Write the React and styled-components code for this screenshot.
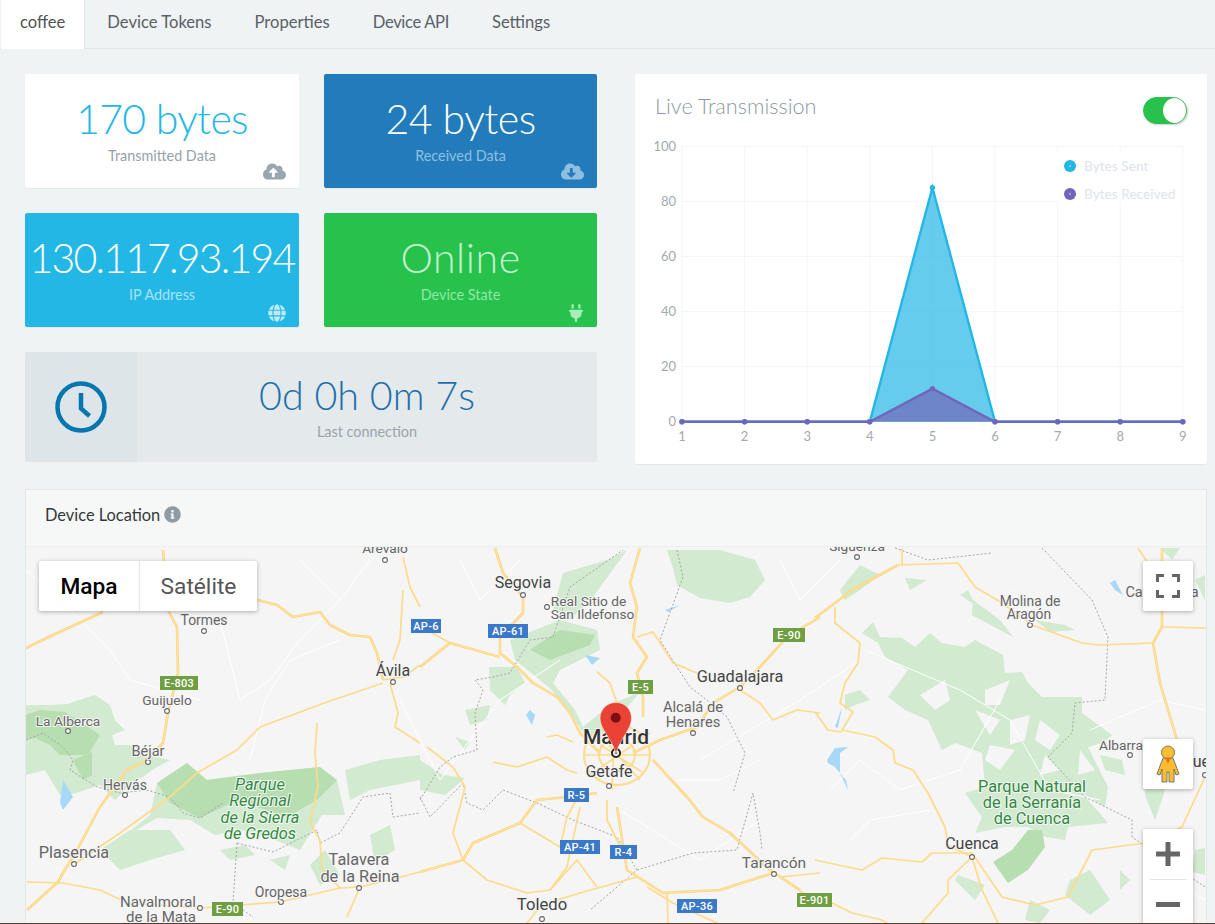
import React from 'react';
import styled, { createGlobalStyle } from 'styled-components';
import { FaCloudUploadAlt, FaCloudDownloadAlt, FaGlobe, FaPlug, FaInfoCircle } from 'react-icons/fa';

const GlobalStyle = createGlobalStyle`
    html, body {
        margin: 0;
        padding: 0;
        height: 924px;
        overflow: hidden;
        background: #eff3f4;
        font-family: 'Lato', 'Open Sans', sans-serif;
    }
`;

const Page = styled.div`
    width: 1215px;
    height: 924px;
    overflow: hidden;
    position: relative;
`;

const Tabs = styled.nav`
    display: flex;
    height: 48px;
    padding-left: 1px;
    border-bottom: 1px solid #dde6e9;
`;

const Tab = styled.a`
    padding: ${p => (p.$active ? '0 19px' : '0 21px')};
    margin-right: ${p => (p.$active ? '1px' : '0')};
    line-height: 44px;
    height: 49px;
    box-sizing: border-box;
    font-size: 16.6px;
    letter-spacing: ${p => p.$spacing || 0}px;
    color: ${p => (p.$active ? '#4f5256' : '#5a6066')};
    background: ${p => (p.$active ? '#fff' : 'transparent')};
    border-right: 1px solid ${p => (p.$active ? '#dde6e9' : 'transparent')};
`;

const Content = styled.div`
    padding: 25px 8px 0 25px;
    display: flex;
    flex-direction: column;
    gap: 25px;
`;

const TopRow = styled.div`
    display: flex;
    justify-content: space-between;
`;

const LeftColumn = styled.div`
    width: 572px;
    display: grid;
    grid-template-columns: 274px 273px;
    grid-template-rows: 114px 114px 110px;
    gap: 25px;
`;

const StatCard = styled.div`
    position: relative;
    border-radius: 2px;
    background: ${p => p.$bg};
    box-shadow: 0 1px 1px rgba(0, 0, 0, 0.05);
    text-align: center;
    padding-top: 20px;
    box-sizing: border-box;
`;

const StatValue = styled.div`
    font-size: 41px;
    font-weight: 300;
    line-height: 50px;
    white-space: nowrap;
    letter-spacing: ${p => p.$spacing || 0}px;
    color: ${p => p.$color};
`;

const StatLabel = styled.div`
    font-size: 14.4px;
    line-height: 18px;
    margin-top: 3px;
    color: ${p => p.$color};
`;

const CornerIcon = styled.span`
    position: absolute;
    right: ${p => p.$right || 13}px;
    bottom: 5px;
    font-size: ${p => p.$size || 23}px;
    line-height: 0;
    color: ${p => p.$color};
`;

const ClockCard = styled.div`
    grid-column: 1 / span 2;
    display: flex;
    background: #e4e9ec;
    border-radius: 2px;
`;

const ClockIconBox = styled.div`
    width: 112px;
    display: flex;
    align-items: center;
    justify-content: center;
    background: #dde5e8;
    border-radius: 2px 0 0 2px;
`;

const ClockText = styled.div`
    flex: 1;
    text-align: center;
    padding-top: 18px;
`;

const ClockValue = styled.div`
    font-size: 39.5px;
    font-weight: 300;
    line-height: 50px;
    color: #1f6fab;
`;

const ClockLabel = styled.div`
    font-size: 14.4px;
    line-height: 18px;
    margin-top: 3px;
    color: #9aa4ab;
`;

const ChartCard = styled.section`
    width: 572px;
    height: 390px;
    background: #fff;
    border-radius: 2px;
    box-shadow: 0 1px 1px rgba(0, 0, 0, 0.05);
    box-sizing: border-box;
    padding: 23px 20px 0 20px;
`;

const ChartHeader = styled.div`
    display: flex;
    justify-content: space-between;
    align-items: flex-start;
    height: 27px;
`;

const ChartTitle = styled.h3`
    margin: 0;
    font-size: 21.7px;
    font-weight: 300;
    line-height: 18px;
    color: #8d99a3;
`;

const Toggle = styled.div`
    width: 44px;
    height: 27px;
    border-radius: 14px;
    background: #27c24c;
    display: flex;
    justify-content: flex-end;
    box-sizing: border-box;
    border: 1px solid #27c24c;
    box-shadow: 1px 1px 2px rgba(0, 0, 0, 0.2);
`;

const Knob = styled.span`
    width: 23px;
    height: 25px;
    border-radius: 50%;
    background: #fff;
`;

const ChartSvg = styled.svg`
    display: block;
    width: 572px;
    height: 340px;
    margin-left: -20px;
    text {
        font-family: 'Lato', sans-serif;
    }
`;

const Panel = styled.section`
    width: 1182px;
    height: 440px;
    box-sizing: border-box;
    border: 1px solid #e3e8ea;
    border-bottom: none;
    background: #f6f8f8;
`;

const PanelHeader = styled.header`
    height: 57px;
    padding: 0 0 7px 19px;
    display: flex;
    align-items: center;
    gap: 4px;
    font-size: 16.4px;
    color: #33383c;
    border-bottom: 1px solid #eceff0;
    box-sizing: border-box;
`;

const InfoIcon = styled.span`
    display: flex;
    font-size: 17px;
    color: #8f9ba3;
`;

const MapArea = styled.div`
    position: relative;
    height: 377px;
    overflow: hidden;
    background: #f5f5f5;
`;

const MapSvg = styled.svg`
    display: block;
    width: 1180px;
    height: 377px;
    text {
        font-family: 'Roboto', sans-serif;
        text-anchor: middle;
        paint-order: stroke;
        stroke: #f5f5f5;
        stroke-width: 2px;
    }
    text.shield {
        stroke: none;
        font-weight: 500;
        letter-spacing: 0.3px;
    }
`;

const MapTypes = styled.div`
    position: absolute;
    left: 13px;
    top: 14px;
    display: flex;
    height: 50px;
    background: #fff;
    border-radius: 2px;
    box-shadow: 0 1px 4px rgba(0, 0, 0, 0.3);
`;

const MapType = styled.div`
    display: flex;
    align-items: center;
    justify-content: center;
    width: ${p => p.$w}px;
    font-family: 'Roboto', sans-serif;
    font-size: 22.7px;
    font-weight: ${p => (p.$active ? 500 : 400)};
    color: ${p => (p.$active ? '#000' : '#565656')};
    border-right: ${p => (p.$active ? '1px solid #e6e6e6' : 'none')};
`;

const MapButton = styled.div`
    position: absolute;
    right: 13px;
    top: ${p => p.$top}px;
    width: 50px;
    height: ${p => p.$h || 50}px;
    background: #fff;
    border-radius: 2px;
    box-shadow: 0 1px 4px rgba(0, 0, 0, 0.3);
    display: flex;
    flex-direction: ${p => (p.$column ? 'column' : 'row')};
    align-items: center;
    justify-content: center;
`;

const ZoomPart = styled.div`
    height: 50px;
    width: 50px;
    flex: none;
    display: flex;
    align-items: center;
    justify-content: center;
`;

const ZoomDivider = styled.div`
    width: 37px;
    height: 1px;
    flex: none;
    background: #e6e6e6;
`;

const BottomLine = styled.div`
    position: absolute;
    left: 0;
    right: 0;
    bottom: 0;
    height: 1px;
    background: #5a3a30;
`;

const yTicks = [100, 80, 60, 40, 20, 0];
const xTicks = [1, 2, 3, 4, 5, 6, 7, 8, 9];
const sent = [0, 0, 0, 0, 85, 0, 0, 0, 0];
const received = [0, 0, 0, 0, 12, 0, 0, 0, 0];
const CHART_TOP = 50;
const px = n => 47 + (n - 1) * 62.6;
const py = v => 347.7 - v * 2.754;

const Series = ({ data, color, fill }) => {
    const pts = data.map((v, i) => `${px(i + 1)},${py(v)}`).join(' ');
    return (
        <g>
            <polygon points={`${px(1)},${py(0)} ${pts} ${px(9)},${py(0)}`} fill={fill} />
            <polyline points={pts} fill="none" stroke={color} strokeWidth="2.4" />
            {data.map((v, i) => (
                <circle key={i} cx={px(i + 1)} cy={py(v)} r="2.7" fill={color} />
            ))}
        </g>
    );
};

const LiveChart = () => (
    <ChartSvg viewBox={`0 ${CHART_TOP} 572 340`}>
        {yTicks.map(t => (
            <g key={t}>
                <line x1={px(1)} x2={px(9)} y1={py(t)} y2={py(t)} stroke="#f3f6f7" />
                <text x="41" y={py(t) + 4.5} textAnchor="end" fontSize="13" fill="#a3a9ae">{t}</text>
            </g>
        ))}
        {xTicks.map(t => (
            <g key={t}>
                <line x1={px(t)} x2={px(t)} y1={py(100)} y2={py(0)} stroke="#f3f6f7" />
                <text x={px(t)} y={py(0) + 19} textAnchor="middle" fontSize="13" fill="#a3a9ae">{t}</text>
            </g>
        ))}
        <Series data={sent} color="#23b7e5" fill="rgba(35,183,229,0.7)" />
        <Series data={received} color="#7266ba" fill="rgba(114,102,186,0.7)" />
        <rect x="422" y="79" width="126" height="49" fill="#fff" opacity="0.85" />
        <circle cx="435" cy="92" r="6" fill="#23b7e5" />
        <circle cx="435" cy="92" r="0.7" fill="#fff" />
        <text x="449" y="97" fontSize="13.7" fill="#dde4ea">Bytes Sent</text>
        <circle cx="435" cy="120" r="6" fill="#7266ba" />
        <circle cx="435" cy="120" r="0.7" fill="#fff" />
        <text x="449" y="125" fontSize="13.7" fill="#dde4ea">Bytes Received</text>
    </ChartSvg>
);

// map shapes in page coordinates, the viewBox starts at the map's corner
const lightGreen = [
    '26,705 50,705 67,704 95,695 110,705 115,720 125,730 112,735 115,745 130,745 145,755 170,760 152,770 125,790 115,800 100,785 70,795 60,795 45,770 26,775',
    '157,783 187,763 207,780 260,773 320,767 337,780 345,815 322,815 300,850 270,838 240,830 215,835 190,820 157,818 122,838 150,815',
    '100,850 130,830 170,830 185,850 150,860 120,870',
    '220,850 245,845 255,855 230,860',
    '270,860 290,855 285,870',
    '310,865 325,850 340,875 320,885',
    '370,835 390,825 395,850 375,862',
    '345,770 380,760 420,755 420,780 370,790 350,800',
    '510,640 560,620 597,630 600,650 560,670 553,683 575,710 583,727 610,705 640,692 625,710 605,730 600,745 585,735 570,713 552,690 530,672 515,660',
    '489,667 517,667 525,683 510,695 505,705 490,690',
    '563,573 607,560 627,550 593,597 570,620 553,610',
    '667,550 720,550 755,560 765,580 750,597 730,603 700,598 677,585 672,565',
    '465,710 490,705 487,720 470,725',
    '420,760 443,775 465,778 445,795 420,790',
    '455,737 470,742 465,750',
    '862,633 873,622 880,637 902,638 915,647 930,633 942,643 965,647 975,640 1003,655 1005,673 1022,672 1028,683 1042,697 1082,697 1082,713 1112,735 1102,743 1088,747 1108,787 1105,807 1082,793 1108,823 1068,827 1065,840 1045,837 1028,827 1005,827 975,833 982,817 965,793 985,787 982,753 955,743 942,750 928,720 905,710 888,697 908,670 885,657 878,643',
    '973,600 1000,620 1013,637 985,622 972,615',
    '905,578 927,580 910,590',
    '960,595 968,590 975,605',
    '1035,620 1065,625 1075,630 1050,632',
    '840,590 860,565 880,575 860,590 845,600',
    '1070,880 1090,870 1110,900 1090,915 1065,895',
    '1030,900 1050,910 1040,923 1025,920',
    '955,880 958,875 985,885 975,900 970,895',
    '1143,770 1160,760 1165,790 1155,820 1145,795',
    '1120,870 1130,880 1120,890',
    '1195,850 1205,848 1205,875 1192,872',
    '845,695 860,690 870,700 855,705 845,710',
    '1100,755 1122,760 1125,775 1105,770',
    '1160,548 1180,548 1172,560',
    '1195,580 1205,575 1205,600',
];
const darkGreen = [
    '157,783 187,763 207,780 260,773 320,767 337,780 317,800 287,817 237,800 200,818 170,803',
    '26,715 40,710 65,712 85,725 100,735 88,755 60,755 50,745 35,738 26,740',
    '73,760 92,752 92,775 83,780',
    '530,650 560,630 595,635 590,645 550,660',
    '1028,830 1042,830 1045,847 1028,870 1008,883 993,862 1012,850',
];
// cut outs showing the land colour through the forest
const gaps = [
    '985,690 1010,680 1000,705 985,705',
    '975,710 1000,720 990,735',
    '1010,720 1030,715 1025,740 1010,745',
    '990,745 1015,750 1000,770 985,760',
    '1040,720 1060,735 1050,750 1035,740',
    '920,695 945,680 950,700 935,710',
    '1045,755 1060,770 1040,775',
    '1080,750 1095,770 1078,775',
];
const water = [
    '63,780 73,797 63,810 60,803',
    '1110,583 1115,580 1123,595 1115,590',
    '827,760 835,748 848,747 840,753 840,773 848,790 846,780 835,767 828,763',
    '835,727 842,707 838,728',
    '585,655 600,658 592,665',
    '530,710 535,715 532,725 526,715',
    '665,610 680,605 668,612',
];
const highways = [
    '163,550 168,610 177,627 178,673 168,713 163,743 147,760 127,770 100,807 77,850 63,873 58,882 27,910',
    '26,648 53,635 103,612',
    '257,600 277,605 293,617 320,612 330,625 350,635 370,637 377,653 383,680',
    '495,548 503,573 523,597 523,613 500,637 500,653 517,667 533,683 557,697 570,713 580,733 600,753',
    '420,667 450,643 500,657',
    '640,548 630,583 637,607 633,637 647,657 637,673 643,697 643,717',
    '820,617 787,637 760,667 740,687 713,703 697,727 660,740 633,753',
    '653,760 687,797 703,817 730,833 770,870 800,890',
    '773,873 720,890 663,893 627,870 617,807',
    '815,618 835,603 852,590 898,565',
    '1153,643 1160,683 1177,740',
    '1162,627 1162,548',
    '1153,643 1162,627',
    '420,872 463,860 473,843 520,823 537,800 567,797 597,793',
];
const roads = [
    '383,683 327,702 260,727 237,750 197,773 170,797 120,833 73,865',
    '390,683 398,713 395,727 420,743',
    '383,680 403,677 420,665',
    '403,557 410,587 420,607',
    '403,590 400,640 393,660',
    '27,882 63,883 100,890 127,903 200,908 280,902 340,888 360,887 397,878 420,872',
    '317,723 315,753 318,787 310,823 320,840 322,870 340,888',
    '360,887 347,917',
    '450,643 427,630',
    '597,672 610,683 617,703',
    '740,690 760,703 773,720 797,710 820,713',
    '637,637 653,632 673,663 697,673',
    '607,800 607,820 627,860',
    '667,893 668,923',
    '647,887 673,903 717,923',
    '820,873 780,877',
    '780,877 803,893 820,900',
    '520,823 560,847 567,817 580,793',
    '463,860 453,833 465,787 453,767 427,747',
    '463,860 487,880 527,893 550,890 577,860 597,887',
    '550,890 567,867 580,807',
    '493,762 517,767 547,757 567,770 577,773',
    '547,737 557,735 573,742',
    '527,923 543,903',
    '547,903 580,893 637,877',
    '898,565 958,563 975,587 1002,603 1032,625 1082,643 1098,645 1153,643',
    '902,548 902,565',
    '1162,627 1207,628',
    '1138,548 1148,563',
    '835,607 835,623 860,643 858,663 845,683 840,703 853,712 842,730 875,737 893,750 895,763 913,770 928,793 945,827 948,845 972,857',
    '815,712 828,730 842,732',
    '815,860 862,870 882,858 922,862 932,853 972,853 1002,897 1035,905 1068,897 1092,850 1145,843 1182,827 1205,777',
    '972,857 948,880 948,893 922,923',
    '972,857 982,890 998,923',
    '832,903 852,913 882,920 887,923',
    '600,735 640,780',
    '590,775 650,733',
    '615,725 612,790',
    '584,755 650,755',
    '590,738 642,772',
];
const whiteRoads = [
    '26,570 60,600 110,650 130,680 200,700',
    '220,620 240,700 270,680 300,640 340,600',
    '250,760 265,700 290,660 340,640',
    '400,700 440,780 500,700 560,660',
    '700,760 800,700 860,660',
    '865,650 960,690 1010,720 1050,790 1100,800',
    '830,790 860,760 900,790 960,770 1000,700',
    '1090,730 1160,700 1205,710',
    '850,840 870,820 930,810',
    '460,560 480,600 520,560',
    '620,810 700,860 760,820',
    '1010,590 1040,620',
    '300,560 340,600 370,560',
    '670,780 720,780 760,760',
    '780,560 800,600 840,560',
    '1170,880 1205,900',
];
const borders = [
    '26,740 43,733 63,747 73,760 70,770 97,787 120,793 147,790 170,797 183,813 200,818 223,803',
    '237,843 233,903 253,917',
    '237,843 273,852 317,830 320,843 340,833 363,797 390,793 393,817 420,813',
    '420,800 440,767 453,757 477,750 475,713 483,690 475,680 493,677 510,673 530,640 553,637 570,587 623,550',
    '420,797 430,817 463,783 467,803 483,810 503,790 537,803 573,820 617,837 637,870 590,910',
    '637,870 693,853 737,850 753,793 760,833 762,850',
    '677,550 683,577 660,640 677,667 690,687 703,697 727,717 745,753 733,793',
    '895,548 928,560 992,553',
    '1042,548 1092,600 1108,637 1105,700 1075,703 1072,733 1048,757 1085,797 1132,820 1132,837 1205,887',
];
const shields = [
    { x: 160, y: 676, w: 38, t: 'E-803', c: '#6e9f43' },
    { x: 212, y: 902, w: 31, t: 'E-90', c: '#6e9f43' },
    { x: 411, y: 619, w: 30, t: 'AP-6', c: '#3a78c8' },
    { x: 488, y: 624, w: 40, t: 'AP-61', c: '#3a78c8' },
    { x: 773, y: 628, w: 32, t: 'E-90', c: '#6e9f43' },
    { x: 628, y: 680, w: 25, t: 'E-5', c: '#6e9f43' },
    { x: 564, y: 788, w: 25, t: 'R-5', c: '#3a78c8' },
    { x: 560, y: 840, w: 40, t: 'AP-41', c: '#3a78c8' },
    { x: 610, y: 845, w: 27, t: 'R-4', c: '#3a78c8' },
    { x: 677, y: 899, w: 40, t: 'AP-36', c: '#3a78c8' },
    { x: 797, y: 893, w: 35, t: 'E-901', c: '#6e9f43' },
];
const dots = [
    [385, 560], [204, 631], [393, 682], [167, 711], [68, 731], [148, 762], [125, 795], [74, 864], [359, 888],
    [281, 902], [200, 908], [523, 595], [547, 607], [740, 688], [693, 733], [609, 786], [542, 919], [774, 874],
    [857, 557], [1030, 625], [1130, 755], [1205, 775], [972, 857],
];
const labels = [
    { x: 385, y: 553, s: 13.7, t: 'Arévalo' },
    { x: 204, y: 625, s: 13.9, t: 'Tormes' },
    { x: 393, y: 676, s: 16, t: 'Ávila', c: '#444' },
    { x: 167, y: 705, s: 13.7, t: 'Guijuelo' },
    { x: 68, y: 726, s: 13.7, t: 'La Alberca' },
    { x: 148, y: 756, s: 14.5, t: 'Béjar' },
    { x: 125, y: 790, s: 14, t: 'Hervás' },
    { x: 74, y: 858, s: 16.3, t: 'Plasencia' },
    { x: 359, y: 865, s: 16.3, t: 'Talavera' },
    { x: 360, y: 882, s: 16.3, t: 'de la Reina' },
    { x: 281, y: 897, s: 14, t: 'Oropesa' },
    { x: 158, y: 907, s: 15, t: 'Navalmoral' },
    { x: 161, y: 922, s: 15, t: 'de la Mata' },
    { x: 523, y: 588, s: 16, t: 'Segovia', c: '#444' },
    { x: 588.5, y: 606, s: 13.7, t: 'Real Sitio de' },
    { x: 592.5, y: 619, s: 13.7, t: 'San Ildefonso' },
    { x: 740, y: 682, s: 16.3, t: 'Guadalajara', c: '#444' },
    { x: 693, y: 712, s: 14.7, t: 'Alcalá de' },
    { x: 693, y: 727, s: 14.7, t: 'Henares' },
    { x: 609, y: 777, s: 16, t: 'Getafe', c: '#444' },
    { x: 542, y: 910, s: 16.7, t: 'Toledo', c: '#444' },
    { x: 774, y: 868, s: 15.5, t: 'Tarancón' },
    { x: 857, y: 551, s: 13.7, t: 'Sigüenza' },
    { x: 1030, y: 606, s: 13.9, t: 'Molina de' },
    { x: 1029, y: 619, s: 13.9, t: 'Aragón' },
    { x: 1162, y: 597, s: 14.5, t: 'Calamocha' },
    { x: 1130, y: 750, s: 13.7, t: 'Albarracín' },
    { x: 1192, y: 767, s: 16, t: 'Teruel', c: '#444' },
    { x: 972, y: 849, s: 16, t: 'Cuenca', c: '#444' },
    { x: 1032, y: 792, s: 16.3, t: 'Parque Natural', c: '#2e8b3d' },
    { x: 1032, y: 808, s: 16.3, t: 'de la Serranía', c: '#2e8b3d' },
    { x: 1032, y: 824, s: 16.3, t: 'de Cuenca', c: '#2e8b3d' },
];
const gredos = ['Parque', 'Regional', 'de la Sierra', 'de Gredos'];

const MapDrawing = () => (
    <MapSvg viewBox="26 547 1180 377">
        {lightGreen.map((p, i) => <polygon key={i} points={p} fill="#d1ead0" />)}
        {darkGreen.map((p, i) => <polygon key={i} points={p} fill="#b7deb0" />)}
        {gaps.map((p, i) => <polygon key={i} points={p} fill="#f5f5f5" />)}
        {water.map((p, i) => <polygon key={i} points={p} fill="#a8d8f8" />)}
        {whiteRoads.map((p, i) => <polyline key={i} points={p} fill="none" stroke="#fff" strokeWidth="1" />)}
        {borders.map((p, i) => <polyline key={i} points={p} fill="none" stroke="#a5a5a5" strokeWidth="1" strokeDasharray="2 2" />)}
        {roads.map((p, i) => <polyline key={i} points={p} fill="none" stroke="#fddb8a" strokeWidth="1.7" strokeLinejoin="round" />)}
        <ellipse cx="617" cy="755" rx="33" ry="30" fill="none" stroke="#fddb8a" strokeWidth="2" />
        <ellipse cx="617" cy="755" rx="18" ry="16" fill="none" stroke="#fddb8a" strokeWidth="2" />
        {highways.map((p, i) => (
            <g key={i}>
                <polyline points={p} fill="none" stroke="#fdd47a" strokeWidth="2.6" strokeLinejoin="round" />
                <polyline points={p} fill="none" stroke="#feeec4" strokeWidth="0.7" strokeLinejoin="round" />
            </g>
        ))}
        {dots.map(([x, y], i) => <circle key={i} cx={x} cy={y} r="2.4" fill="#fff" stroke="#666" strokeWidth="1.1" />)}
        {shields.map(s => (
            <g key={s.t + s.x}>
                <rect x={s.x} y={s.y} width={s.w} height="14" fill={s.c} />
                <text className="shield" x={s.x + s.w / 2} y={s.y + 11} fontSize="11" fill="#fff">{s.t}</text>
            </g>
        ))}
        {labels.map(l => (
            <text key={l.t} x={l.x} y={l.y} fontSize={l.s} fill={l.c || '#666'}>{l.t}</text>
        ))}
        {gredos.map((t, i) => (
            <text key={t} x="260" y={790 + i * 16.3} fontSize="16.4" fontStyle="italic" fill="#2e8b3d">{t}</text>
        ))}
        <text x="616" y="744" fontSize="21" fontWeight="500" fill="#333">Madrid</text>
        <circle cx="616" cy="753" r="4" fill="#fff" stroke="#222" strokeWidth="2" />
        <circle cx="616" cy="753" r="1.3" fill="#222" />
        <path d="M616 702.5 C606.5 702.5 600 710 600 718 C600 730 612 738 616 754 C620 738 631.5 730 631.5 718 C631.5 710 625.5 702.5 616 702.5 Z" fill="#ea4335" stroke="#fff" strokeOpacity="0.5" />
        <circle cx="615.7" cy="717.7" r="5" fill="#7d1010" />
    </MapSvg>
);

const ClockIcon = () => (
    <svg width="54" height="54" viewBox="0 0 54 54">
        <circle cx="27" cy="27" r="23.5" fill="none" stroke="#0477b0" strokeWidth="4.5" />
        <path d="M27 13 V28.5 L35.5 36" fill="none" stroke="#0477b0" strokeWidth="4.5" />
    </svg>
);

const App = () => (
    <Page>
        <GlobalStyle />
        <Tabs>
            <Tab $active>coffee</Tab>
            <Tab>Device Tokens</Tab>
            <Tab>Properties</Tab>
            <Tab $spacing={-0.35}>Device API</Tab>
            <Tab>Settings</Tab>
        </Tabs>
        <Content>
            <TopRow>
                <LeftColumn>
                    <StatCard $bg="#fff">
                        <StatValue $color="#23b7e5" $spacing={-0.7}>170 bytes</StatValue>
                        <StatLabel $color="#98a2a9">Transmitted Data</StatLabel>
                        <CornerIcon $color="#98a6ad"><FaCloudUploadAlt /></CornerIcon>
                    </StatCard>
                    <StatCard $bg="#227cbb">
                        <StatValue $color="#fff" $spacing={-0.5}>24 bytes</StatValue>
                        <StatLabel $color="#8fbfe0">Received Data</StatLabel>
                        <CornerIcon $color="#8fbfe0"><FaCloudDownloadAlt /></CornerIcon>
                    </StatCard>
                    <StatCard $bg="#23b7e5">
                        <StatValue $color="#fff" $spacing={-1.8}>130.117.93.194</StatValue>
                        <StatLabel $color="#a9e2f5">IP Address</StatLabel>
                        <CornerIcon $color="#bfe9f7" $size={18}><FaGlobe /></CornerIcon>
                    </StatCard>
                    <StatCard $bg="#27c24c">
                        <StatValue $color="#c3f0cd" $spacing={0.6}>Online</StatValue>
                        <StatLabel $color="#93e6a6">Device State</StatLabel>
                        <CornerIcon $color="#a9edb8" $size={18} $right={12}><FaPlug /></CornerIcon>
                    </StatCard>
                    <ClockCard>
                        <ClockIconBox><ClockIcon /></ClockIconBox>
                        <ClockText>
                            <ClockValue>0d 0h 0m 7s</ClockValue>
                            <ClockLabel>Last connection</ClockLabel>
                        </ClockText>
                    </ClockCard>
                </LeftColumn>
                <ChartCard>
                    <ChartHeader>
                        <ChartTitle>Live Transmission</ChartTitle>
                        <Toggle><Knob /></Toggle>
                    </ChartHeader>
                    <LiveChart />
                </ChartCard>
            </TopRow>
            <Panel>
                <PanelHeader>
                    Device Location
                    <InfoIcon><FaInfoCircle /></InfoIcon>
                </PanelHeader>
                <MapArea>
                    <MapDrawing />
                    <MapTypes>
                        <MapType $active $w={100}>Mapa</MapType>
                        <MapType $w={117}>Satélite</MapType>
                    </MapTypes>
                    <MapButton $top={14}>
                        <svg width="24" height="24" viewBox="0 0 24 24" fill="none" stroke="#666" strokeWidth="3">
                            <path d="M1.5 8 V1.5 H8 M16 1.5 H22.5 V8 M22.5 16 V22.5 H16 M8 22.5 H1.5 V16" />
                        </svg>
                    </MapButton>
                    <MapButton $top={192}>
                        <svg width="24" height="38" viewBox="0 0 24 38">
                            <circle cx="12" cy="7.5" r="6.5" fill="#fdbc2c" stroke="#777" />
                            <path d="M7 13 H17 L23 29 L20 30 L18 24 V37 H13 V27 H11 V37 H6 V24 L4 30 L1 29 Z" fill="#fdbc2c" stroke="#777" />
                            <path d="M9 13 H15 L12 19 Z" fill="#e2752a" />
                        </svg>
                    </MapButton>
                    <MapButton $top={282} $h={101} $column>
                        <ZoomPart>
                            <svg width="24" height="24" viewBox="0 0 24 24"><path d="M9.5 0 H14.5 V9.5 H24 V14.5 H14.5 V24 H9.5 V14.5 H0 V9.5 H9.5 Z" fill="#666" /></svg>
                        </ZoomPart>
                        <ZoomDivider />
                        <ZoomPart>
                            <svg width="24" height="6" viewBox="0 0 24 6"><rect width="24" height="5" fill="#666" /></svg>
                        </ZoomPart>
                    </MapButton>
                </MapArea>
            </Panel>
        </Content>
        <BottomLine />
    </Page>
);

export default App;
